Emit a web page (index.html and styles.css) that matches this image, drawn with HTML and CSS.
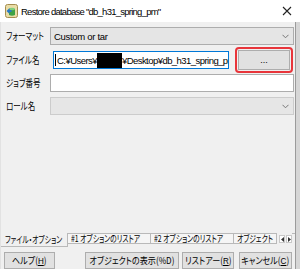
FILE: index.html
```html
<!DOCTYPE html>
<html lang="ja">
<head>
<meta charset="utf-8">
<title>Restore database</title>
<link rel="stylesheet" href="styles.css">
</head>
<body>
<div class="titlebar">
  <svg class="app-icon" width="13" height="14" viewBox="0 0 13 14">
    <rect x="0.5" y="0.5" width="12" height="13" rx="2" fill="#e9dca6" stroke="#a58d4f"/>
    <path d="M4 5 h6 v6 q-3 1.5 -6 0 z" fill="#3ea346"/>
    <ellipse cx="7" cy="5" rx="3" ry="1.3" fill="#7fd07f"/>
    <path d="M1.5 7 l3 -3 v2 h2 v2 h-2 v2 z" fill="#2a78c8"/>
  </svg>
  <span class="title">Restore database "db_h31_spring_pm"</span>
  <svg class="close" width="10" height="10" viewBox="0 0 10 10">
    <path d="M1 1 L9 9 M9 1 L1 9" stroke="#222" stroke-width="1.1"/>
  </svg>
</div>
<div class="main">
  <div class="panel">
    <div class="form">
      <div class="row r1">
        <span class="label"><span class="jp">フォーマット</span></span>
        <div class="combo">
          <span class="latin">Custom or tar</span>
          <svg class="chev" width="7" height="5" viewBox="0 0 7 5"><path d="M0.5 0.8 L3.5 3.8 L6.5 0.8" fill="none" stroke="#777" stroke-width="1"/></svg>
        </div>
      </div>
      <div class="row r2">
        <span class="label"><span class="jp">ファイル名</span></span>
        <div class="file-input"><span class="caret"></span><span class="latin">C:¥Users¥</span><span class="redact"></span><span class="latin">¥Desktop¥db_h31_spring_pm</span></div>
        <span class="highlight"><span class="browse">...</span></span>
      </div>
      <div class="row r3">
        <span class="label"><span class="jp">ジョブ番号</span></span>
        <div class="text-input"></div>
      </div>
      <div class="row r4">
        <span class="label"><span class="jp">ロール名</span></span>
        <div class="combo disabled">
          <svg class="chev" width="7" height="5" viewBox="0 0 7 5"><path d="M0.5 0.8 L3.5 3.8 L6.5 0.8" fill="none" stroke="#777" stroke-width="1"/></svg>
        </div>
      </div>
    </div>
    <div class="tabs">
      <span class="tab active"><span class="jp">ファイル・オプション</span></span>
      <span class="tab t1"><span class="jp">#1 オプションのリストア</span></span>
      <span class="tab t2"><span class="jp">#2 オプションのリストア</span></span>
      <span class="tab t3"><span class="jp">オブジェクト</span></span>
      <span class="arrows">
        <span class="arr"><svg width="3" height="5" viewBox="0 0 3 5"><path d="M3 0 L0 2.5 L3 5 z" fill="#333"/></svg></span>
        <span class="arr"><svg width="3" height="5" viewBox="0 0 3 5"><path d="M0 0 L3 2.5 L0 5 z" fill="#333"/></svg></span>
      </span>
      <span class="tabline"></span>
    </div>
    <div class="buttons">
      <span class="btn b-help"><span class="jp">ヘルプ(<u>H</u>)</span></span>
      <span class="btn b-show"><span class="jp">オブジェクトの表示(%D)</span></span>
      <span class="btn b-restore"><span class="jp">リストアー(<u>R</u>)</span></span>
      <span class="btn b-cancel"><span class="jp">キャンセル(<u>C</u>)</span></span>
    </div>
  </div>
</div>
</body>
</html>
```

FILE: styles.css
```css
html, body {
  margin: 0;
  padding: 0;
}
body {
  width: 300px;
  height: 269px;
  overflow: hidden;
  background: #d6d6d6;
  font-family: "Noto Sans CJK JP", sans-serif;
  font-feature-settings: "palt" 1;
  color: #000;
}
.latin {
  font-family: "Liberation Sans", Arial, sans-serif;
  font-feature-settings: normal;
}
.jp {
  display: inline-block;
  white-space: nowrap;
  transform: scaleX(0.75);
  transform-origin: left center;
}
.titlebar {
  width: 300px;
  height: 22px;
  background: #fff;
  display: flex;
  align-items: center;
  box-sizing: border-box;
}
.app-icon {
  margin-left: 5px;
  flex: none;
}
.title {
  margin-left: 3px;
  font-family: "Liberation Sans", Arial, sans-serif;
  font-size: 9.5px;
  letter-spacing: -0.75px;
  white-space: nowrap;
}
.close {
  margin-left: auto;
  margin-right: 8px;
}
.main {
  display: flex;
  height: 247px;
}
.panel {
  width: 296px;
  background: #f0f0f0;
  border-right: 1px solid #9b9b9b;
  border-left: 1px solid #e2e2e2;
  box-sizing: border-box;
  display: flex;
  flex-direction: column;
}
.form {
  flex: 1;
  padding-top: 5px;
}
.row {
  display: flex;
  align-items: center;
  padding-left: 5px;
}
.r2 { margin-top: 5px; height: 20px; }
.r3 { margin-top: 4px; }
.r4 { margin-top: 5px; }
.label {
  width: 44px;
  flex: none;
  font-size: 10px;
  line-height: 12px;
  white-space: nowrap;
}
.combo {
  width: 244px;
  height: 18px;
  box-sizing: border-box;
  background: #e5e5e5;
  border: 1px solid #adadad;
  display: flex;
  align-items: center;
  padding-left: 3px;
  font-size: 9.5px;
}
.combo .latin {
  font-size: 9.5px;
  letter-spacing: -0.3px;
}
.combo.disabled {
  background: #e6e6e6;
  border-color: #cccccc;
}
.chev {
  margin-left: auto;
  margin-right: 4px;
}
.file-input {
  margin-left: 3px;
  width: 176px;
  height: 18px;
  box-sizing: border-box;
  border: 1px solid #0078d7;
  background: #fff;
  display: flex;
  align-items: center;
  overflow: hidden;
  white-space: nowrap;
  font-size: 9.5px;
  padding-left: 1px;
}
.file-input .latin {
  font-size: 9.5px;
  letter-spacing: -0.55px;
  flex: none;
}
.caret {
  width: 1px;
  height: 12px;
  background: #000;
  margin-right: 1px;
  flex: none;
}
.redact {
  width: 25px;
  height: 15px;
  background: #000;
  flex: none;
}
.highlight {
  margin-left: 6px;
  margin-top: -3px;
  margin-bottom: -3px;
  border: 2px solid #e8353b;
  border-radius: 4px;
  padding: 1px;
  display: flex;
}
.browse {
  width: 52px;
  height: 20px;
  box-sizing: border-box;
  background: #e1e1e1;
  border: 1px solid #adadad;
  font-family: "Liberation Sans", Arial, sans-serif;
  font-size: 9px;
  display: flex;
  align-items: center;
  justify-content: center;
  padding-bottom: 1px;
}
.text-input {
  width: 244px;
  height: 18px;
  box-sizing: border-box;
  background: #fff;
  border: 1px solid #adadad;
}
.tabs {
  height: 14px;
  display: flex;
  align-items: flex-start;
  font-size: 9.5px;
  white-space: nowrap;
}
.tab {
  height: 11px;
  box-sizing: border-box;
  border: 1px solid #b9b9b9;
  border-left: none;
  line-height: 9px;
  padding: 0 2px;
  background: #f5f5f5;
  display: block;
}
.tab .jp {
  transform: scaleX(0.72);
}
.tab.active {
  height: 14px;
  width: 67px;
  border-top: none;
  background: #f0f0f0;
  line-height: 12px;
  padding-left: 4px;
}
.t1 { width: 83px; padding-left: 3px; }
.t2 { width: 83px; padding-left: 3px; }
.t3 { width: 43px; padding-left: 3px; }
.arrows {
  display: flex;
  margin-left: 2px;
  margin-top: 2px;
  gap: 1px;
}
.arr {
  width: 6px;
  height: 8px;
  box-sizing: border-box;
  border: 1px solid #c8c8c8;
  background: #fff;
  display: flex;
  align-items: center;
  justify-content: center;
}
.tabline {
  flex: 1;
  height: 0;
  border-top: 1px solid #b9b9b9;
}
.buttons {
  display: flex;
  align-items: center;
  padding-top: 4px;
  height: 18px;
  padding-left: 3px;
}
.btn {
  height: 17px;
  box-sizing: border-box;
  background: #e1e1e1;
  border: 1px solid #adadad;
  font-size: 9.5px;
  display: flex;
  align-items: center;
  justify-content: center;
  white-space: nowrap;
}
.btn .jp {
  transform: scaleX(0.85);
  transform-origin: center center;
}
.btn u {
  font-family: "Liberation Sans", Arial, sans-serif;
}
.b-help { width: 51px; }
.b-show { width: 94px; margin-left: 30px; }
.b-restore { width: 52px; margin-left: 3px; }
.b-cancel { width: 53px; margin-left: 5px; }
```
